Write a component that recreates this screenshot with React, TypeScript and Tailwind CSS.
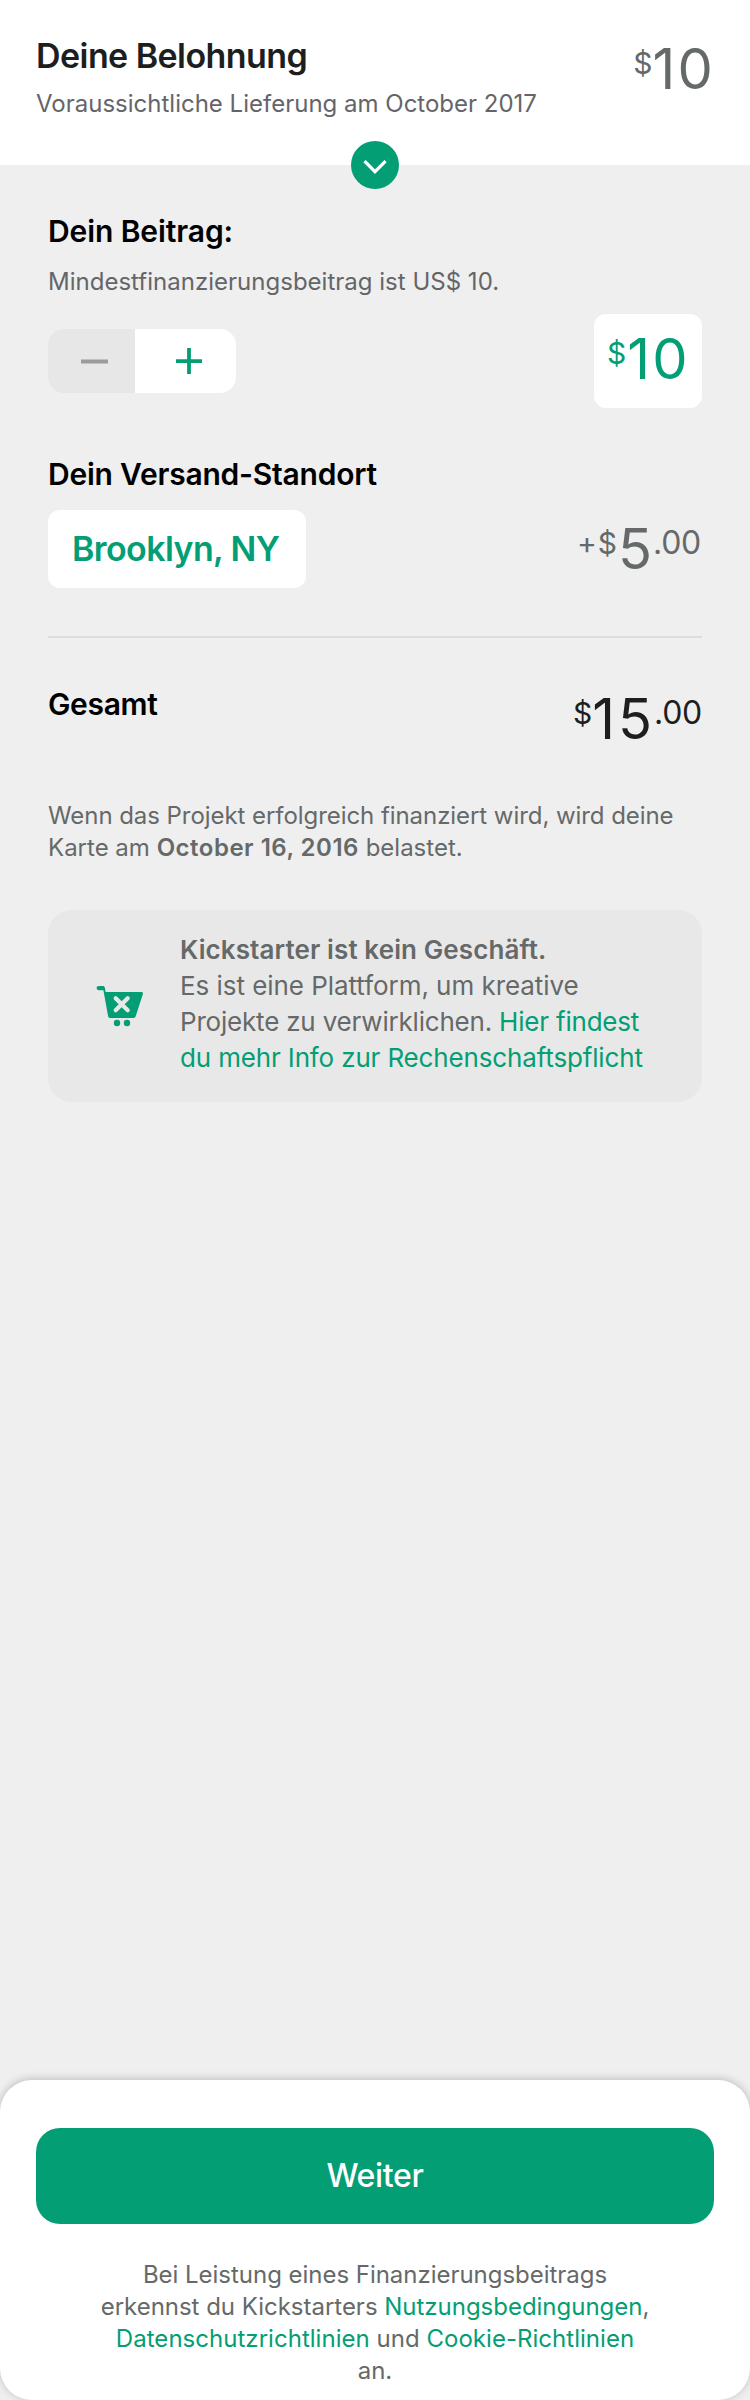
import React from "react";

type AmountProps = {
  prefix: string;
  value: string;
  cents?: string;
  className?: string;
  prefixClass?: string;
  valueClass?: string;
};

function Amount({ prefix, value, cents, className = "", prefixClass = "", valueClass = "" }: AmountProps) {
  return (
    <div className={`flex items-start whitespace-nowrap ${className}`}>
      <span className={`mt-[6px] text-[30px] leading-8 ${prefixClass}`}>{prefix}</span>
      <span className={`text-[56px] leading-[56px] ${valueClass}`}>{value}</span>
      {cents && <span className="mt-[6px] text-[32px] leading-8 tracking-[-0.3px]">{cents}</span>}
    </div>
  );
}

function ChevronBadge() {
  return (
    <button className="absolute left-1/2 top-[141px] h-12 w-12 -translate-x-1/2 rounded-full bg-[#039e74]">
      <svg viewBox="0 0 48 48" className="h-12 w-12" fill="none" stroke="#fff" strokeWidth="3.2">
        <path d="M14.6 21.2 24 30.7 33.4 21.2" strokeLinecap="square" />
      </svg>
    </button>
  );
}

function CartIcon() {
  return (
    <svg viewBox="0 0 48 42" className="h-[42px] w-12 shrink-0" fill="#039e74">
      <path d="M3 1h3.800c1.100 0 1.800.600 2 1.600L9.600 7H45.400c1.300 0 1.900.9 1.500 2L39.700 31.200c-.4 1.200-1.100 1.800-2.400 1.800H14.200c-1.200 0-1.900-.6-2.100-1.700L7.400 5.200H3C1.400 5.200.6 4.300.6 3.100S1.400 1 3 1Z" />
      <path d="M19.700 13.300 31.700 25.300M31.700 13.300 19.700 25.300" stroke="#e8e8e8" strokeWidth="4.200" strokeLinecap="round" />
      <circle cx="21" cy="38" r="3.200" />
      <circle cx="31" cy="38" r="3.200" />
    </svg>
  );
}

export default function App() {
  return (
    <div className="flex h-[2400px] w-[750px] flex-col overflow-hidden bg-[#efefef] font-['Inter',sans-serif] text-[#656969]">
      <header className="relative flex h-[165px] shrink-0 justify-between bg-white px-9 pt-9">
        <div className="whitespace-nowrap">
          <h1 className="text-[34px] font-semibold leading-10 tracking-[-0.56px] text-[#1d1e1e]">Deine Belohnung</h1>
          <p className="mt-3 text-2xl leading-8 text-[#656569]">Voraussichtliche Lieferung am October 2017</p>
        </div>
        <Amount prefix="$" value="10" className="mt-[5px]" valueClass="-mr-[1px] tracking-[2.2px]" />
        <ChevronBadge />
      </header>

      <main className="flex grow flex-col px-12">
        <h2 className="mt-12 text-[30px] font-semibold leading-9 tracking-[-0.1px] text-black">Dein Beitrag:</h2>
        <p className="mt-[17px] text-2xl leading-8 tracking-[0.01px] text-[#656569]">
          Mindestfinanzierungsbeitrag ist US$ 10.
        </p>
        <div className="mt-4 flex items-center justify-between">
          <div className="flex h-16 w-[188px] overflow-hidden rounded-2xl">
            <button className="flex w-[87px] items-center bg-[#e7e7e7] pl-[33px]">
              <svg viewBox="0 0 27 26" className="h-[26px] w-[27px]">
                <path d="M0 13.400H27" stroke="#999e9d" strokeWidth="4" />
              </svg>
            </button>
            <button className="flex grow items-center bg-white pl-[41px]">
              <svg viewBox="0 0 26 26" className="h-[26px] w-[26px]">
                <path d="M0 13.200H26M13 0V26" stroke="#039e74" strokeWidth="3.800" />
              </svg>
            </button>
          </div>
          <div className="flex h-[94px] w-[108px] rounded-xl bg-white pl-[13px] pt-[17px] text-[#039e74]">
            <Amount prefix="$" value="10" valueClass="ml-[1px] tracking-[2.2px]" />
          </div>
        </div>

        <h2 className="mt-12 text-[30px] font-semibold leading-9 tracking-[-0.22px] text-black">
          Dein Versand-Standort
        </h2>
        <div className="mt-[18px] flex items-start justify-between">
          <button className="h-[78px] w-[258px] whitespace-nowrap rounded-xl bg-white pb-[1px] pl-6 text-left text-[34px] font-semibold tracking-[-0.6px] text-[#039e74]">
            Brooklyn, NY
          </button>
          <Amount
            prefix="+$"
            value="5"
            cents=".00"
            className="mr-[1px] mt-[11px]"
            prefixClass="tracking-[1px]"
            valueClass="mr-[1px]"
          />
        </div>

        <hr className="mt-12 h-[2px] border-0 bg-[#dcdedd]" />

        <div className="mt-12 flex h-[61px] items-start justify-between">
          <h2 className="text-[30px] font-semibold leading-9 tracking-[-0.35px] text-black">Gesamt</h2>
          <Amount
            prefix="$"
            value="15"
            cents=".00"
            className="mt-[5px] text-[#1d1e1e]"
            valueClass="-mr-[1px] tracking-[3px]"
          />
        </div>

        <p className="mt-[53px] whitespace-nowrap text-2xl leading-8">
          <span className="block tracking-[-0.06px]">Wenn das Projekt erfolgreich finanziert wird, wird deine</span>
          <span className="block">
            Karte am <strong className="font-semibold tracking-[0.5px]">October 16, 2016</strong> belastet.
          </span>
        </p>

        <section className="mt-[46px] flex h-48 items-center rounded-3xl bg-[#e8e8e8] pl-12">
          <CartIcon />
          <p className="ml-9 mt-[-4px] whitespace-nowrap text-[26px] leading-9">
            <strong className="block font-semibold tracking-[0.11px]">Kickstarter ist kein Geschäft.</strong>
            <span className="block tracking-[-0.05px]">Es ist eine Plattform, um kreative</span>
            <span className="block tracking-[-0.2px]">
              Projekte zu verwirklichen. <a className="text-[#039e74]">Hier findest</a>
            </span>
            <a className="block tracking-[-0.15px] text-[#039e74]">du mehr Info zur Rechenschaftspflicht</a>
          </p>
        </section>
      </main>

      <footer className="flex h-[320px] shrink-0 flex-col rounded-[32px] bg-white px-9 pt-12 shadow-[0_-1px_8px_rgba(0,0,0,0.22)]">
        <button className="h-24 shrink-0 rounded-3xl bg-[#039e74] text-[32px] font-medium tracking-[-0.34px] text-white">
          Weiter
        </button>
        <p className="mt-[35px] whitespace-nowrap text-center text-2xl leading-8">
          <span className="block tracking-[-0.03px]">Bei Leistung eines Finanzierungsbeitrags</span>
          <span className="block tracking-[-0.02px]">
            erkennst du Kickstarters <a className="text-[#039e74]">Nutzungsbedingungen</a>,
          </span>
          <span className="block tracking-[0.03px]">
            <a className="text-[#039e74]">Datenschutzrichtlinien</a> und <a className="text-[#039e74]">Cookie-Richtlinien</a>
          </span>
          <span className="block">an.</span>
        </p>
      </footer>
    </div>
  );
}
